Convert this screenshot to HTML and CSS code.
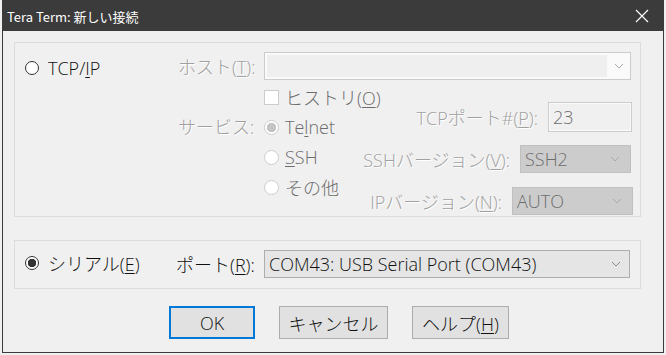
FILE: index.html
```html
<!DOCTYPE html>
<html lang="ja">
<head>
    <meta charset="UTF-8">
    <title>Tera Term: 新しい接続</title>
    <link rel="stylesheet" href="styles.css">
</head>
<body>

    <!-- Dialog window -->
    <div class="window">

        <!-- Title bar -->
        <div class="titlebar">
            <span class="title">Tera Term: 新しい接続</span>
            <svg class="close" width="14" height="14" viewBox="0 0 14 14">
                <path d="M1 1 L13 13 M13 1 L1 13" stroke="#ffffff" stroke-width="1.2" fill="none"/>
            </svg>
        </div>

        <!-- TCP/IP group -->
        <div class="group tcp">
            <div class="mode">
                <span class="radio"></span>
                <span>TCP/<u>I</u>P</span>
            </div>
            <div class="main">
                <div class="host-row">
                    <span class="label dim">ホスト(<u>T</u>):</span>
                    <div class="combo host">
                        <div class="edit"></div>
                        <svg class="chev" width="10" height="6" viewBox="0 0 10 6">
                            <polyline points="1,1 5,5 9,1" stroke="#aaaaaa" fill="none"/>
                        </svg>
                    </div>
                </div>
                <div class="opts">
                    <div class="labels">
                        <span class="label dim">サービス:</span>
                    </div>
                    <div class="choices">
                        <div class="choice"><span class="check"></span><span>ヒストリ(<u>O</u>)</span></div>
                        <div class="choice"><span class="radio off on"></span><span>Te<u>l</u>net</span></div>
                        <div class="choice"><span class="radio off"></span><span><u>S</u>SH</span></div>
                        <div class="choice"><span class="radio off"></span><span>その他</span></div>
                    </div>
                    <div class="ports">
                        <div class="port-row tcpport">
                            <span class="label dim">TCPポート#(<u>P</u>):</span>
                            <div class="field">23</div>
                        </div>
                        <div class="port-row sshver">
                            <span class="label dim">SSHバージョン(<u>V</u>):</span>
                            <div class="select">
                                <span>SSH2</span>
                                <svg class="chev" width="10" height="6" viewBox="0 0 10 6">
                                    <polyline points="1,1 5,5 9,1" stroke="#aaaaaa" fill="none"/>
                                </svg>
                            </div>
                        </div>
                        <div class="port-row ipver">
                            <span class="label dim">IPバージョン(<u>N</u>):</span>
                            <div class="select">
                                <span>AUTO</span>
                                <svg class="chev" width="10" height="6" viewBox="0 0 10 6">
                                    <polyline points="1,1 5,5 9,1" stroke="#aaaaaa" fill="none"/>
                                </svg>
                            </div>
                        </div>
                    </div>
                </div>
            </div>
        </div>

        <!-- Serial group -->
        <div class="group serial">
            <div class="mode">
                <span class="radio on"></span>
                <span>シリアル(<u>E</u>)</span>
            </div>
            <div class="main">
                <div class="host-row">
                    <span class="label port-label">ポート(<u>R</u>):</span>
                    <div class="combo com">
                        <span>COM43: USB Serial Port (COM43)</span>
                        <svg class="chev" width="10" height="6" viewBox="0 0 10 6">
                            <polyline points="1,1 5,5 9,1" stroke="#8a8a8a" fill="none"/>
                        </svg>
                    </div>
                </div>
            </div>
        </div>

        <!-- Buttons -->
        <div class="buttons">
            <button class="btn ok">OK</button>
            <button class="btn cancel">キャンセル</button>
            <button class="btn help">ヘルプ(<u>H</u>)</button>
        </div>

    </div>

</body>
</html>
```

FILE: styles.css
```css
body {
    margin: 0;
    padding: 0;
    background-color: #f0f0f0;
    font-family: "Open Sans", "Noto Sans CJK JP", sans-serif;
    font-size: 18px;
    font-weight: 300;
    color: #111;
}

u {
    text-decoration-thickness: 1px;
    text-underline-offset: 2px;
}

/* Window frame */
.window {
    margin-left: 2px;
    width: 662px;
    height: 353px;
    box-sizing: border-box;
    border: 1px solid #3c3c3c;
    background-color: #f0f0f0;
}

.titlebar {
    height: 30px;
    background-color: #3b3b3b;
    display: flex;
    align-items: center;
    justify-content: space-between;
    padding: 0 14px 0 4px;
}

.title {
    color: #ffffff;
    font-family: "Noto Sans CJK JP", sans-serif;
    font-size: 13px;
    font-weight: 400;
}

/* Group boxes */
.group {
    margin-left: 11px;
    width: 627px;
    box-sizing: border-box;
    border: 1px solid #dcdcdc;
    display: flex;
}

.group.tcp {
    margin-top: 11px;
    height: 175px;
}

.group.serial {
    margin-top: 23px;
    height: 49px;
}

.mode {
    width: 163px;
    flex-shrink: 0;
    box-sizing: border-box;
    padding-left: 10px;
    display: flex;
    align-items: center;
    gap: 9px;
    height: 28px;
}

.tcp .mode {
    margin-top: 11px;
}

.serial .mode {
    margin-top: 8px;
}

.main {
    flex: 1;
    min-width: 0;
}

.host-row {
    display: flex;
    align-items: center;
    margin-top: 9px;
    height: 28px;
}

.label {
    width: 86px;
    flex-shrink: 0;
    white-space: nowrap;
}

.port-label {
    margin-left: -2px;
    width: 88px;
}

.dim {
    color: #a0a0a0;
    text-shadow: 1px 1px 0 #ffffff;
}

/* Combo boxes */
.combo {
    height: 28px;
    flex-shrink: 0;
    box-sizing: border-box;
    display: flex;
    align-items: center;
    justify-content: space-between;
}

.combo.host {
    width: 367px;
    border: 1px solid #cccccc;
    background-color: #fafafa;
    padding: 2px 6px 2px 2px;
}

.combo.host .edit {
    width: 340px;
    height: 100%;
    background-color: #efefef;
}

.combo.com {
    width: 366px;
    border: 1px solid #adadad;
    background-color: #e5e5e5;
    padding: 0 8px 0 4px;
}

.chev {
    flex-shrink: 0;
}

/* Options area */
.opts {
    display: flex;
}

.labels {
    width: 86px;
    flex-shrink: 0;
    padding-top: 32px;
    line-height: 30px;
}

.choices {
    width: 149px;
    flex-shrink: 0;
    padding-top: 2px;
    color: #6d6d6d;
}

.choice {
    height: 30px;
    display: flex;
    align-items: center;
    gap: 6px;
    white-space: nowrap;
}

.check {
    width: 15px;
    height: 15px;
    box-sizing: border-box;
    border: 1px solid #cccccc;
    background-color: #ffffff;
}

.radio {
    width: 14px;
    height: 14px;
    box-sizing: border-box;
    border: 1px solid #333333;
    border-radius: 50%;
    background-color: #ffffff;
    flex-shrink: 0;
}

.radio.on {
    background: radial-gradient(circle, #333333 0 4px, #ffffff 4.5px);
}

.radio.off {
    width: 15px;
    height: 15px;
    border-color: #cccccc;
    background: #ffffff;
}

.radio.off.on {
    background: radial-gradient(circle, #c4c4c4 0 4.5px, #ffffff 5px);
}

.ports {
    flex: 1;
    min-width: 0;
    display: flex;
    flex-direction: column;
    align-items: flex-end;
}

.port-row {
    display: flex;
    align-items: center;
    gap: 10px;
    flex-shrink: 0;
}

.port-row .label {
    width: auto;
}

.tcpport {
    margin-top: 22px;
    margin-right: 8px;
}

.sshver {
    margin-top: 13px;
    margin-right: 9px;
}

.ipver {
    margin-top: 14px;
    margin-right: 7px;
}

.field {
    width: 84px;
    height: 30px;
    flex-shrink: 0;
    box-sizing: border-box;
    border: 1px solid #cccccc;
    box-shadow: inset 0 0 0 1px #fafafa;
    background-color: #f0f0f0;
    color: #6d6d6d;
    padding-left: 4px;
    line-height: 28px;
}

.select {
    height: 28px;
    flex-shrink: 0;
    box-sizing: border-box;
    border: 1px solid #c0c0c0;
    background-color: #cccccc;
    color: #6d6d6d;
    display: flex;
    align-items: center;
    justify-content: space-between;
    padding: 0 10px 0 4px;
}

.sshver .select {
    width: 111px;
}

.ipver .select {
    width: 121px;
}

/* Buttons */
.buttons {
    display: flex;
    gap: 24px;
    margin-top: 17px;
    padding-left: 166px;
}

.btn {
    height: 33px;
    box-sizing: border-box;
    border: 1px solid #adadad;
    background-color: #e1e1e1;
    font-family: inherit;
    font-size: 18px;
    font-weight: 300;
    color: #111;
    padding: 0;
}

.btn.ok {
    width: 86px;
    border: 2px solid #0078d7;
}

.btn.cancel {
    width: 109px;
}

.btn.help {
    width: 97px;
}
```
